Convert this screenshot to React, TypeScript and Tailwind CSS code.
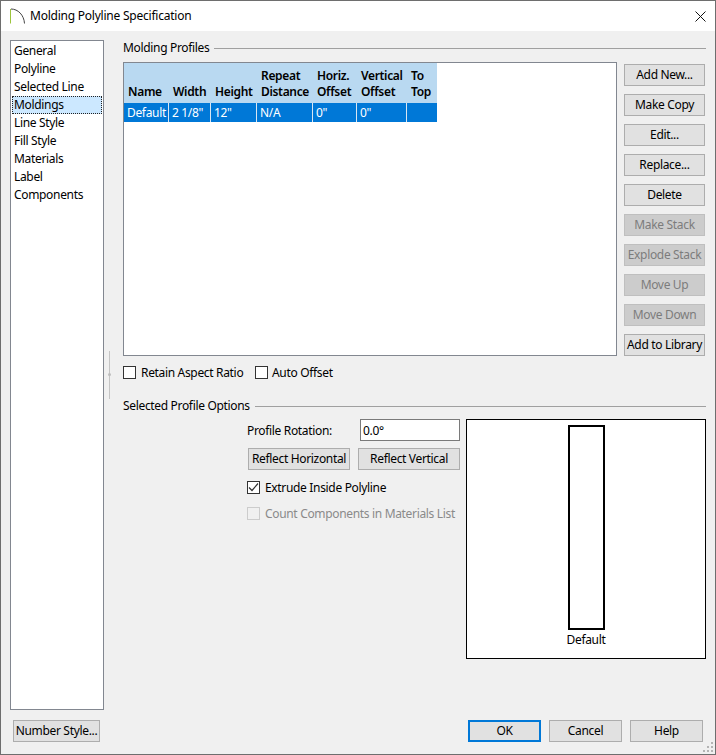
import React from 'react';

const navItems = ['General', 'Polyline', 'Selected Line', 'Moldings', 'Line Style', 'Fill Style', 'Materials', 'Label', 'Components'];

const sideButtons = [
  { label: 'Add New...' },
  { label: 'Make Copy' },
  { label: 'Edit...' },
  { label: 'Replace...' },
  { label: 'Delete' },
  { label: 'Make Stack', disabled: true },
  { label: 'Explode Stack', disabled: true },
  { label: 'Move Up', disabled: true },
  { label: 'Move Down', disabled: true },
  { label: 'Add to Library' },
];

const columns = [
  { top: '', bottom: 'Name', value: 'Default', width: 'w-[44px]' },
  { top: '', bottom: 'Width', value: '2 1/8"', width: 'w-[41px]' },
  { top: '', bottom: 'Height', value: '12"', width: 'w-[45px]' },
  { top: 'Repeat', bottom: 'Distance', value: 'N/A', width: 'w-[55px]' },
  { top: 'Horiz.', bottom: 'Offset', value: '0"', width: 'w-[43px]' },
  { top: 'Vertical', bottom: 'Offset', value: '0"', width: 'w-[49px]' },
  { top: 'To', bottom: 'Top', value: '', width: 'w-[30px]' },
];

function Button({ label, disabled, className }: { label: string; disabled?: boolean; className: string }) {
  return (
    <button
      className={`flex items-center justify-center border whitespace-nowrap ${
        disabled ? 'bg-[#cccccc] border-[#bfbfbf] text-[#7c7c7c]' : 'bg-[#e1e1e1] border-[#adadad] text-black'
      } ${className}`}
    >
      {label}
    </button>
  );
}

function Checkbox({ checked, disabled }: { checked?: boolean; disabled?: boolean }) {
  return (
    <span className={`flex h-[13px] w-[13px] shrink-0 items-center justify-center border ${disabled ? 'border-[#cccccc] bg-[#f0f0f0]' : 'border-[#333333] bg-white'}`}>
      {checked && (
        <svg width="11" height="11" viewBox="0 0 11 11" fill="none">
          <path d="M1 5.5 L4 8.5 L10 1.5" stroke="#333333" strokeWidth="1.2" />
        </svg>
      )}
    </span>
  );
}

function GroupHeading({ title, className }: { title: string; className: string }) {
  return (
    <div className={`flex items-center gap-[5px] ${className}`}>
      <span className="whitespace-nowrap">{title}</span>
      <div className="h-px flex-1 bg-[#a0a0a0]" />
    </div>
  );
}

export default function App() {
  return (
    <div className="flex h-[755px] w-[716px] flex-col border border-[#6e6e6e] bg-[#f0f0f0] font-['Noto_Sans',sans-serif] text-[12px] leading-[16px] tracking-[-0.33px] text-black">
      {/* title bar */}
      <div className="flex h-[30px] shrink-0 items-center bg-white pl-[9px] pr-[9px]">
        <svg width="16" height="16" viewBox="0 0 16 16" fill="none">
          <path d="M0.5 1 V15.5" stroke="#9cc43c" strokeWidth="1" />
          <path d="M1 1 C8 1 14 7 14.5 15.5" stroke="#444444" strokeWidth="1" />
        </svg>
        <span className="ml-[4px] flex-1 tracking-[-0.23px]">Molding Polyline Specification</span>
        <svg width="11" height="11" viewBox="0 0 11 11" fill="none">
          <path d="M0.5 0.5 L10.5 10.5 M10.5 0.5 L0.5 10.5" stroke="#111111" strokeWidth="1" />
        </svg>
      </div>

      {/* body */}
      <div className="flex min-h-0 flex-1 pt-[9px]">
        <div className="ml-[9px] flex h-[670px] w-[94px] shrink-0 flex-col border border-[#828790] bg-white py-px">
          {navItems.map((item) => (
            <div
              key={item}
              className={
                item === 'Moldings'
                  ? 'mx-px flex h-[18px] items-center border border-dotted border-[#222222] bg-[#cce8ff] pl-px'
                  : 'flex h-[18px] items-center pl-[3px]'
              }
            >
              {item}
            </div>
          ))}
        </div>

        {/* splitter */}
        <div className="flex h-[670px] w-[19px] shrink-0 items-center justify-center pr-[8px]">
          <div className="relative h-[48px] w-px bg-[#c4c4c4]">
            <div className="absolute left-[-1px] top-[22px] h-[3px] w-[3px] rounded-full bg-[#bdbdbd]" />
          </div>
        </div>

        {/* main */}
        <div className="flex w-[593px] flex-col pr-[10px]">
          <GroupHeading title="Molding Profiles" className="h-[16px]" />

          <div className="mt-[6px] flex gap-[7px]">
            <div className="h-[294px] w-[494px] border border-[#828790] bg-white">
              <div className="flex w-fit gap-px bg-[#b9d9f1]">
                {columns.map((col) => (
                  <div key={col.bottom + col.top} className={`${col.width} flex h-[40px] flex-col justify-end pb-[3px] pl-[4px] font-semibold whitespace-nowrap`}>
                    {col.top && <span>{col.top}</span>}
                    <span>{col.bottom}</span>
                  </div>
                ))}
              </div>
              <div className="flex w-fit gap-px bg-[#d9e6f2]">
                {columns.map((col) => (
                  <div key={col.bottom + col.top} className={`${col.width} flex h-[19px] items-center bg-[#0078d7] pl-[3px] text-white whitespace-nowrap`}>
                    {col.value}
                  </div>
                ))}
              </div>
            </div>

            <div className="flex flex-col gap-[8px] pt-[2px]">
              {sideButtons.map((b) => (
                <Button key={b.label} label={b.label} disabled={b.disabled} className="h-[22px] w-[81px]" />
              ))}
            </div>
          </div>

          <div className="mt-[10px] flex h-[13px] items-center">
            <Checkbox />
            <span className="ml-[5px] w-[114px] whitespace-nowrap">Retain Aspect Ratio</span>
            <Checkbox />
            <span className="ml-[4px] whitespace-nowrap">Auto Offset</span>
          </div>

          <GroupHeading title="Selected Profile Options" className="mt-[19px] h-[16px]" />

          <div className="mt-[5px] flex">
            <div className="ml-[124px] flex w-[213px] flex-col">
              <div className="flex h-[22px] items-center">
                <span className="w-[113px] whitespace-nowrap pt-[2px]">Profile Rotation:</span>
                <div className="flex h-[22px] w-[100px] items-center border border-[#7a7a7a] bg-white pl-[2px] pt-[2px]">0.0°</div>
              </div>
              <div className="mt-[7px] flex gap-[8px] pl-px">
                <Button label="Reflect Horizontal" className="h-[22px] w-[102px]" />
                <Button label="Reflect Vertical" className="h-[22px] w-[102px]" />
              </div>
              <div className="mt-[11px] flex h-[13px] items-center">
                <Checkbox checked />
                <span className="ml-[5px] whitespace-nowrap">Extrude Inside Polyline</span>
              </div>
              <div className="mt-[13px] flex h-[13px] items-center text-[#8a8a8a]">
                <Checkbox disabled />
                <span className="ml-[5px] whitespace-nowrap">Count Components in Materials List</span>
              </div>
            </div>

            <div className="ml-[6px] flex h-[240px] w-[240px] flex-col items-center border border-black bg-white pt-[5px]">
              <div className="h-[205px] w-[37px] border-2 border-black" />
              <span className="mt-[2px]">Default</span>
            </div>
          </div>
        </div>
      </div>

      {/* footer */}
      <div className="relative flex h-[34px] shrink-0 pl-[12px] pr-[12px]">
        <Button label="Number Style..." className="h-[22px] w-[87px]" />
        <div className="ml-auto flex gap-[8px]">
          <Button label="OK" className="h-[22px] w-[73px] !border-2 !border-[#0078d7]" />
          <Button label="Cancel" className="h-[22px] w-[73px]" />
          <Button label="Help" className="h-[22px] w-[73px]" />
        </div>
        <svg className="absolute bottom-[1px] right-[1px]" width="11" height="11" viewBox="0 0 11 11" fill="#b4b4b4">
          <rect x="8" y="0" width="2" height="2" />
          <rect x="4" y="4" width="2" height="2" />
          <rect x="8" y="4" width="2" height="2" />
          <rect x="0" y="8" width="2" height="2" />
          <rect x="4" y="8" width="2" height="2" />
          <rect x="8" y="8" width="2" height="2" />
        </svg>
      </div>
    </div>
  );
}
